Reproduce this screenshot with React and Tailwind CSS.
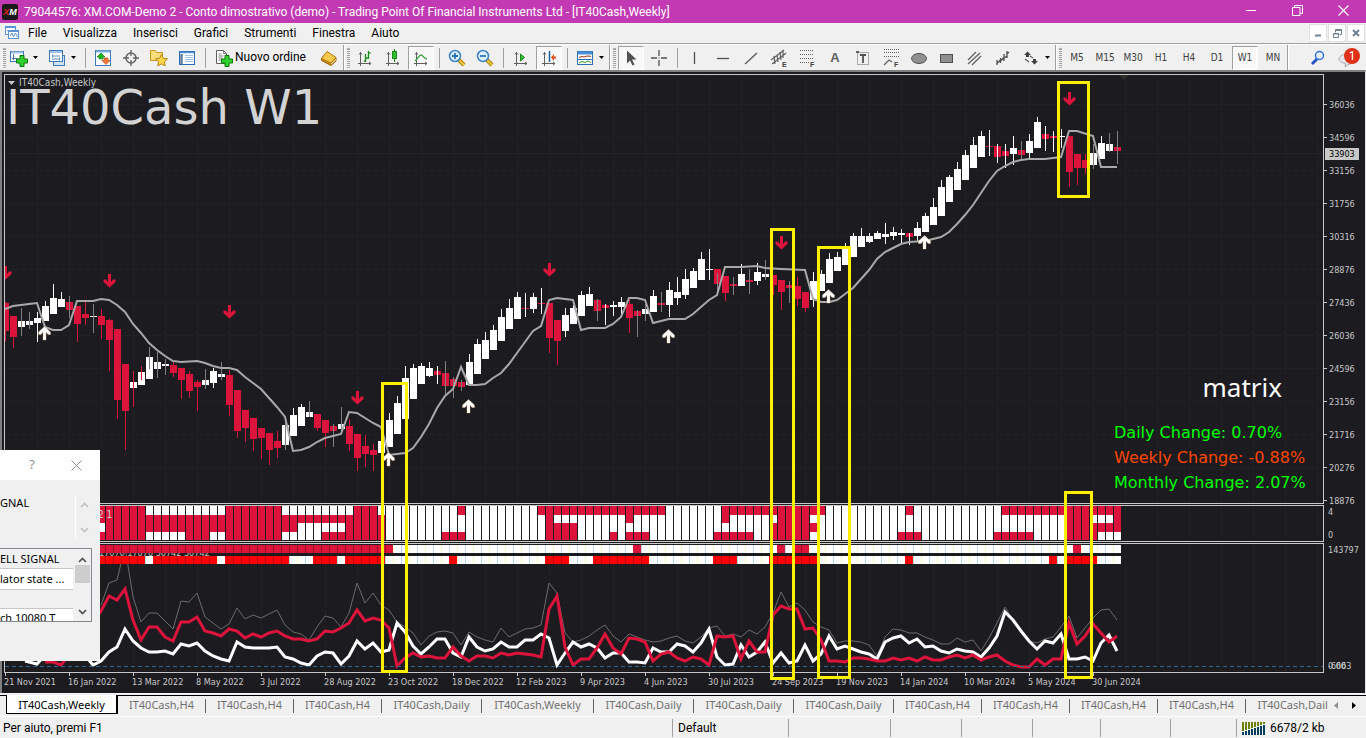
import clsx from 'clsx'

// one entry per week: [kind, body top, body bottom, wick top, wick bottom, wick colour]
// kind: u = up (white), d = down (crimson)
const CANDLES = [
  ['d', 303, 331, 302, 341], ['d', 316, 337, 316, 348], ['u', 321, 327, 308, 336, 'g'], ['u', 321, 325, 312, 329, 'g'],
  ['u', 318, 323, 312, 342], ['u', 306, 321, 301, 321], ['u', 298, 314, 284, 314], ['u', 299, 307, 292, 307],
  ['d', 302, 310, 296, 318, 'g'], ['d', 306, 324, 306, 342], ['d', 314, 318, 302, 325], ['u', 316, 317, 304, 333, 'g'],
  ['d', 316, 325, 309, 339], ['d', 320, 340, 319, 371], ['d', 329, 400, 329, 419], ['d', 364, 411, 364, 450],
  ['u', 382, 388, 371, 407, 'r'], ['u', 372, 385, 366, 380, 'r'], ['u', 357, 379, 347, 369, 'g'], ['u', 362, 369, 352, 378, 'g'],
  ['u', 364, 366, 359, 375, 'g'], ['d', 365, 373, 362, 377], ['d', 368, 380, 368, 399], ['d', 374, 391, 371, 398],
  ['d', 382, 387, 380, 411], ['u', 380, 385, 369, 389, 'g'], ['u', 371, 383, 368, 388], ['u', 374, 377, 362, 380, 'g'],
  ['d', 375, 405, 370, 416], ['d', 390, 431, 390, 438], ['d', 410, 428, 410, 442], ['d', 418, 439, 418, 451],
  ['d', 428, 438, 428, 459], ['d', 433, 450, 433, 465], ['d', 441, 448, 431, 458], ['u', 425, 445, 418, 450, 'g'],
  ['u', 415, 436, 408, 436], ['u', 407, 426, 404, 426], ['u', 412, 417, 401, 417, 'g'], ['d', 414, 428, 414, 431],
  ['d', 420, 433, 420, 447], ['d', 426, 431, 424, 447, 'g'], ['u', 424, 429, 407, 434, 'g'], ['d', 426, 444, 419, 451],
  ['d', 434, 458, 434, 471], ['d', 446, 454, 435, 467], ['d', 450, 455, 444, 471], ['u', 441, 453, 441, 453],
  ['u', 420, 447, 413, 447], ['u', 403, 434, 396, 434], ['u', 378, 419, 366, 419], ['u', 368, 399, 364, 399],
  ['u', 366, 384, 363, 384], ['u', 368, 376, 362, 377], ['d', 371, 375, 366, 384, 'w'], ['d', 373, 386, 361, 394, 'g'],
  ['d', 379, 386, 377, 398, 'g'], ['d', 382, 387, 380, 391, 'g'], ['u', 362, 385, 354, 385], ['u', 344, 374, 339, 374],
  ['u', 340, 359, 332, 359], ['u', 330, 350, 325, 350], ['u', 317, 341, 309, 341], ['u', 308, 329, 299, 329],
  ['u', 297, 319, 292, 319], ['d', 308, 309, 293, 317, 'w'], ['u', 297, 309, 293, 313], ['d', 303, 304, 288, 314, 'w'],
  ['d', 303, 338, 303, 353], ['d', 320, 341, 320, 365], ['u', 315, 331, 308, 337], ['u', 308, 324, 305, 324],
  ['u', 295, 316, 291, 316], ['u', 294, 306, 287, 306], ['d', 300, 311, 299, 321, 'g'], ['d', 305, 308, 304, 325, 'w'],
  ['u', 305, 307, 301, 316], ['u', 302, 307, 297, 317], ['d', 304, 318, 300, 333], ['d', 311, 316, 310, 337, 'g'],
  ['u', 309, 314, 304, 321, 'g'], ['u', 296, 312, 290, 312], ['d', 303, 305, 292, 312, 'g'], ['u', 290, 305, 282, 317],
  ['u', 292, 298, 277, 305], ['u', 279, 295, 269, 299], ['u', 271, 288, 268, 288], ['u', 259, 280, 252, 280],
  ['u', 269, 270, 249, 280], ['d', 269, 284, 273, 293, 'g'], ['d', 276, 293, 276, 301], ['d', 284, 286, 277, 295, 'g'],
  ['u', 274, 286, 264, 286], ['d', 280, 282, 269, 294, 'g'], ['u', 272, 281, 263, 285], ['u', 274, 277, 260, 280, 'g'],
  ['d', 275, 285, 275, 295], ['d', 280, 292, 280, 310], ['d', 285, 288, 281, 303, 'g'], ['d', 286, 299, 277, 306],
  ['d', 292, 308, 292, 312], ['u', 281, 300, 272, 307], ['u', 274, 291, 270, 291], ['u', 259, 283, 253, 283],
  ['u', 257, 271, 252, 271], ['u', 249, 265, 243, 265], ['u', 236, 257, 233, 257], ['u', 236, 247, 228, 247],
  ['u', 236, 242, 233, 243], ['u', 233, 239, 231, 239], ['u', 234, 237, 223, 244], ['u', 232, 236, 227, 240],
  ['u', 233, 235, 229, 244], ['d', 233, 237, 233, 245, 'w'], ['u', 228, 236, 222, 241], ['u', 216, 232, 213, 232],
  ['u', 207, 225, 198, 225], ['u', 187, 216, 180, 216], ['u', 177, 202, 175, 202], ['u', 169, 190, 162, 190],
  ['u', 155, 180, 150, 180], ['u', 145, 168, 137, 168], ['u', 136, 157, 131, 157], ['d', 146, 147, 130, 156, 'w'],
  ['d', 146, 157, 144, 163, 'w'], ['d', 151, 156, 144, 168, 'w'], ['u', 148, 154, 136, 165], ['d', 150, 155, 141, 159, 'g'],
  ['u', 141, 153, 134, 159], ['u', 122, 148, 117, 148], ['d', 134, 139, 126, 151, 'w'], ['d', 136, 138, 131, 152, 'w'],
  ['u', 136, 137, 129, 148], ['d', 136, 172, 136, 187], ['d', 154, 168, 154, 185], ['d', 160, 168, 154, 174],
  ['u', 153, 165, 144, 169, 'g'], ['u', 143, 159, 136, 159], ['u', 144, 151, 133, 152, 'g'], ['d', 147, 151, 131, 164, 'g'],
]

const WICK = { w: '#ffffff', r: '#dc143c', g: '#808080' }

const AVERAGE = `5,309 13,306 29,304 37,303 45,327 53,330 61,330 69,325 77,301 93,301 101,299 109,300 117,305 125,312 133,324 141,333
149,343 157,350 165,356 173,361 181,362 197,361 205,363 213,366 221,368 229,368 237,370 245,377 253,383 261,389 269,398 277,407
285,417 293,451 301,450 309,447 317,442 325,438 333,436 341,434 349,412 357,413 365,418 373,423 381,427 389,455 397,454 405,453
413,448 421,437 429,424 437,408 445,396 453,389 461,367 469,385 477,385 485,384 493,378 501,373 509,364 517,353 525,342 533,331
541,326 549,300 557,298 565,299 573,300 581,330 589,328 605,328 613,324 621,317 629,298 637,298 645,300 653,323 661,321 669,319
685,319 693,314 701,307 709,300 717,295 725,267 741,267 757,266 765,268 781,269 805,270 813,299 821,302 829,302 837,300 845,294
853,288 861,279 869,270 877,259 885,252 893,248 901,244 909,242 925,241 941,237 949,232 957,224 965,215 973,205 981,193 989,181
997,171 1005,166 1013,162 1021,160 1029,159 1045,159 1061,157 1069,131 1077,131 1093,136 1101,167 1117,167`

const DOWN_ARROWS = [[5, 266], [109, 274], [229, 305], [357, 391], [549, 263], [781, 236], [1069, 92]]
const UP_ARROWS = [[44, 326], [388, 452], [468, 399], [668, 329], [828, 289], [924, 235]]

// crimson week ranges of the four matrix rows
const MATRIX = [
  { y: 506, h: 9, runs: [[0, 17], [28, 34], [44, 46], [57, 57], [67, 82], [90, 102], [113, 113], [125, 139]] },
  { y: 515, h: 8, runs: [[0, 47], [68, 68], [78, 78], [90, 90], [97, 100], [133, 135], [139, 139]] },
  { y: 523, h: 9, runs: [[0, 11], [13, 36], [43, 47], [68, 71], [96, 101], [133, 139]] },
  { y: 532, h: 8, runs: [[0, 17], [23, 25], [28, 34], [40, 47], [55, 57], [68, 71], [76, 76], [78, 80], [89, 93], [96, 100], [112, 114], [124, 128], [133, 136]] },
]
const STRIPS = [
  { y: 545, color: '#dc143c', runs: [[0, 48], [79, 79], [97, 97], [99, 100], [134, 134]] },
  { y: 556, color: '#ff0000', runs: [[0, 17], [19, 26], [28, 35], [39, 41], [43, 47], [56, 56], [68, 70], [74, 80], [89, 91], [96, 101], [113, 113], [131, 131], [133, 136]] },
]

// volume lines, one value per week starting from week 12
const TOTAL = [605, 583, 580, 547, 597, 622, 613, 613, 621, 629, 601, 602, 593, 617, 623, 629, 624, 608, 619, 615, 618, 614, 610, 625, 632, 634, 640, 627, 616, 618, 627, 613, 583, 603, 593, 605, 610, 622, 627, 633, 645, 636, 632, 631, 633, 645, 632, 637, 640, 642, 628, 637, 633, 629, 628, 625, 583, 593, 633, 642, 640, 636, 630, 625, 636, 642, 634, 637, 640, 642, 641, 638, 636, 641, 643, 637, 628, 626, 636, 634, 637, 630, 634, 627, 613, 592, 607, 603, 610, 622, 627, 630, 643, 641, 641, 642, 645, 656, 637, 629, 630, 633, 633, 637, 640, 644, 644, 638, 642, 640, 651, 638, 623, 607, 620, 630, 641, 643, 639, 637, 627, 616, 638, 628, 618, 610, 609, 620]
const SELL = [611, 596, 600, 589, 620, 640, 627, 627, 637, 641, 622, 622, 617, 631, 633, 636, 629, 631, 638, 634, 637, 633, 631, 636, 639, 639, 641, 639, 631, 632, 628, 623, 610, 621, 618, 620, 628, 666, 658, 653, 657, 656, 658, 658, 647, 656, 661, 656, 656, 658, 653, 655, 653, 654, 655, 657, 609, 596, 647, 665, 659, 659, 648, 634, 648, 654, 638, 639, 642, 661, 654, 652, 658, 661, 657, 659, 665, 636, 637, 636, 659, 641, 652, 652, 615, 606, 609, 609, 629, 628, 640, 661, 661, 662, 658, 658, 659, 661, 661, 658, 660, 658, 661, 657, 660, 660, 657, 655, 658, 655, 660, 657, 655, 661, 665, 667, 667, 659, 665, 659, 659, 623, 644, 636, 624, 633, 642, 636]
const BUY = [661, 652, 647, 629, 641, 648, 652, 652, 651, 654, 644, 646, 643, 651, 656, 659, 661, 642, 647, 648, 648, 648, 647, 657, 659, 663, 665, 656, 652, 653, 664, 656, 641, 649, 643, 652, 650, 623, 632, 646, 654, 647, 639, 639, 653, 657, 637, 647, 651, 649, 642, 647, 647, 640, 640, 634, 638, 665, 653, 642, 647, 644, 648, 658, 653, 653, 662, 662, 663, 648, 652, 652, 644, 646, 652, 643, 629, 657, 665, 664, 645, 657, 652, 642, 663, 653, 663, 661, 645, 661, 654, 636, 649, 646, 649, 652, 654, 659, 642, 638, 636, 643, 639, 647, 646, 651, 653, 649, 651, 652, 657, 648, 636, 612, 620, 631, 641, 649, 641, 643, 634, 659, 659, 657, 661, 643, 635, 651]

const PRICES = [36036, 34596, 33156, 31756, 30316, 28876, 27436, 26036, 24596, 23156, 21716, 20276, 18876]
const DATES = ['21 Nov 2021', '16 Jan 2022', '13 Mar 2022', '8 May 2022', '3 Jul 2022', '28 Aug 2022', '23 Oct 2022', '18 Dec 2022', '12 Feb 2023', '9 Apr 2023', '4 Jun 2023', '30 Jul 2023', '24 Sep 2023', '19 Nov 2023', '14 Jan 2024', '10 Mar 2024', '5 May 2024', '30 Jun 2024']
const MENU = ['File', 'Visualizza', 'Inserisci', 'Grafici', 'Strumenti', 'Finestra', 'Aiuto']
const TABS = ['H4', 'H4', 'H4', 'Daily', 'Weekly', 'Daily', 'Daily', 'Daily', 'H4', 'H4', 'H4', 'H4', 'Daily']
const PERIODS = ['M5', 'M15', 'M30', 'H1', 'H4', 'D1', 'W1', 'MN']
const TAB_WIDTH = { H4: 'w-[88px]', Daily: 'w-[100px]', Weekly: 'w-[112px]' }

const cx = i => 5 + 8 * i
const points = list => list.map((y, i) => `${cx(i + 12)},${y}`).join(' ')

/* ---------- toolbar ---------- */

function Tool({ label, pressed, children }) {
  return (
    <button
      aria-label={label}
      className={clsx(
        'flex h-6 w-[26px] mx-px shrink-0 items-center justify-center',
        pressed && 'border border-white border-t-[#a0a0a0] border-l-[#a0a0a0] bg-[#f8f8f8]'
      )}
    >
      {children}
    </button>
  )
}

function Caret() {
  return (
    <button aria-label="Altro" className="flex h-6 w-[10px] shrink-0 items-center">
      <svg width="5" height="3"><path d="M0 0h5L2.500 3z" fill="#000" /></svg>
    </button>
  )
}

function Sep() {
  return (
    <div className="flex w-2 shrink-0 justify-center">
      <div className="h-5 w-px bg-[#a0a0a0]" />
    </div>
  )
}

function Grip() {
  return <div className="mx-px h-5 w-[3px] shrink-0 border-y border-[#b0b0b0] bg-[repeating-linear-gradient(#a0a0a0_0_1px,#f0f0f0_1px_2px)]" />
}

function GroupEnd() {
  return (
    <div className="flex h-[25px] w-2 shrink-0 items-center">
      <div className="h-full w-px bg-[#a0a0a0]" />
      <div className="mr-px h-full w-px bg-white" />
      <Grip />
    </div>
  )
}

function Icon({ children, w = 18, h = 18 }) {
  return <svg width={w} height={h} viewBox={`0 0 ${w} ${h}`} fill="none" shapeRendering="auto">{children}</svg>
}

const plus = <path d="M10 6.500h4v3.500h3.500v4H14V17.500h-4V14H6.500v-4H10z" fill="#2fd02f" stroke="#067a06" />
const axes = <path d="M4.500 3v14M2 14.500h13M3 5.500l1.500-2 1.500 2M13 13l2 1.500-2 1.500" stroke="#606060" />

const NewChartIcon = () => (
  <Icon>
    <rect x=".5" y="2.500" width="13" height="10" fill="#fff" stroke="#3f78b8" />
    <path d="M1 3.500h12" stroke="#9cc3ea" strokeWidth="2" />
    <path d="M3.500 5v6M2 9.500h6" stroke="#5b7ea5" />
    {plus}
  </Icon>
)
const ProfilesIcon = () => (
  <Icon>
    <rect x="5.500" y="6.500" width="11" height="10" fill="#cfe3f7" stroke="#3f78b8" />
    <rect x="1.500" y="1.500" width="13" height="11" fill="#fff" stroke="#3f78b8" />
    <path d="M2 3h12" stroke="#9cc3ea" strokeWidth="2" />
    <path d="M4 7h8M4 10h8M4.500 5.500v3M11.500 8.500v3" stroke="#5b8ec4" />
  </Icon>
)
const MarketIcon = () => (
  <Icon>
    <rect x="1.500" y="1.500" width="15" height="15" fill="#fff" stroke="#3f78b8" />
    <path d="M2 2.500h14" stroke="#7fb0e3" strokeWidth="2" />
    <path d="M7 4l4 4H9v2H5V8H3z" fill="#1fb51f" stroke="#0a6e0a" strokeWidth=".6" />
    <path d="M12 15.500L8 11.500h2V9h4v2.500h2z" fill="#ff7a3c" stroke="#b03000" strokeWidth=".6" />
  </Icon>
)
const TargetIcon = () => (
  <Icon>
    <circle cx="9" cy="9" r="5" stroke="#606060" strokeWidth="1.500" />
    <path d="M9 1v6M9 11v6M1 9h6M11 9h6" stroke="#606060" strokeWidth="1.300" />
  </Icon>
)
const FavoritesIcon = () => (
  <Icon>
    <path d="M.5 1.500h5l1 2h6v8H.5z" fill="#f7dd7b" stroke="#c79a1e" />
    <path d="M11.500 5.500l1.900 3.700 4.100.6-3 2.900.7 4.100-3.700-1.900-3.700 1.900.7-4.100-3-2.900 4.100-.6z" fill="#ffd54a" stroke="#b78312" />
  </Icon>
)
const NavigatorIcon = () => (
  <Icon>
    <rect x="1.500" y="2.500" width="15" height="13" fill="#fff" stroke="#2a6db4" />
    <path d="M2 3.500h14" stroke="#4f93d8" strokeWidth="1.500" />
    <path d="M3.500 5v10" stroke="#5f7f9f" strokeWidth="2.500" />
    <path d="M7 6.500h8M7 8.500h8M7 10.500h8M7 12.500h8" stroke="#9fc3ea" />
  </Icon>
)
const OrderIcon = () => (
  <Icon>
    <path d="M1.500 1.500h7l3 3v10h-10z" fill="#fff" stroke="#606060" />
    <path d="M8.500 1.500v3h3M3.500 5h3M3.500 7h5M3.500 9h4M3.500 11h3" stroke="#808080" />
    {plus}
  </Icon>
)
const BookIcon = () => (
  <Icon>
    <path d="M1.500 9.500L7 3l9 6v3l-5 4.500-9.500-5z" fill="#c98a14" stroke="#9a6408" />
    <path d="M1.500 9.500L7 2.500l9 6-5 5.500z" fill="#f6c94a" stroke="#b27c10" />
    <path d="M11 15l5-4.500" stroke="#fff3c4" />
  </Icon>
)
const BarsIcon = () => <Icon>{axes}<path d="M9.500 5v8M12.500 2v8M9.500 12H8M12.500 4h2M9.500 9h3" stroke="#178a17" strokeWidth="1.300" /></Icon>
const CandleIcon = () => <Icon>{axes}<path d="M10.500 0v13" stroke="#178a17" /><rect x="8.500" y="2.500" width="4" height="7" fill="#2fc02f" stroke="#178a17" /></Icon>
const LineIcon = () => <Icon>{axes}<path d="M3 12c3-2 4-6 6-6s2 3 6 4" stroke="#3aa03a" strokeWidth="1.300" /></Icon>
const ScrollIcon = () => <Icon>{axes}<path d="M8.500 5l4 3.500-4 3.500z" fill="#35c235" stroke="#178a17" /></Icon>
const ShiftIcon = () => <Icon>{axes}<path d="M9.500 2v11" stroke="#205f9e" strokeWidth="1.500" /><path d="M11 8.500L14 5v2.500h2v2h-2V12z" fill="#e2501e" /></Icon>

function ZoomIcon({ minus }) {
  return (
    <Icon>
      <path d="M11 11l5 5" stroke="#a97a10" strokeWidth="4" />
      <path d="M11 11l5 5" stroke="#f3cf3a" strokeWidth="2" />
      <circle cx="7" cy="7" r="5.500" fill="#d9efff" stroke="#3c82c4" strokeWidth="1.500" />
      <path d={minus ? 'M4 7h6' : 'M4 7h6M7 4v6'} stroke="#2d74b5" strokeWidth="1.800" />
    </Icon>
  )
}
const IndicatorsIcon = () => (
  <Icon>
    <rect x="1.500" y="2.500" width="15" height="13" fill="#fff" stroke="#2d70b5" />
    <path d="M2 4h14" stroke="#4a90d9" strokeWidth="3" />
    <path d="M3 8.500l3-1 2 .5 3-1 4 .3" stroke="#a03010" />
    <path d="M2 10.500h14" stroke="#2d70b5" />
    <path d="M3 14l3-1.500 3 1 3-1.500 3 1.500" stroke="#2b9a2b" />
  </Icon>
)
const PointerIcon = () => <Icon><path d="M5 1.500v13l3-3 2.500 5 2-1-2.500-5h4.500z" fill="#505050" /></Icon>
const CrossIcon = () => <Icon><path d="M9 1v6M9 11v6M1 9h6M11 9h6M9 8.500v1" stroke="#505050" strokeWidth="1.300" /></Icon>
const HLineIcon = () => <Icon><path d="M3 9.500h12" stroke="#505050" strokeWidth="1.300" /></Icon>
const VLineIcon = () => <Icon><path d="M8.500 3v12" stroke="#505050" strokeWidth="1.300" /></Icon>
const TrendIcon = () => <Icon><path d="M3 15L15 4" stroke="#606060" strokeWidth="1.500" /></Icon>
const ChannelIcon = () => (
  <Icon>
    <path d="M1 11L14 1M2 15L16 4M4 7l1 8M7 6l1 7M10 3l1 8M13 1v8" stroke="#606060" strokeWidth="1.200" />
    <text x="12" y="18" fontSize="7" fontWeight="700" fill="#404040" fontFamily="Liberation Sans, sans-serif">E</text>
  </Icon>
)
const FiboIcon = () => (
  <Icon>
    <path d="M2 1.500h14M2 5.500h14M2 9.500h14M2 13.500h9" stroke="#606060" strokeDasharray="1 1" />
    <text x="12" y="18" fontSize="7" fontWeight="700" fill="#404040" fontFamily="Liberation Sans, sans-serif">F</text>
  </Icon>
)
const FanIcon = () => (
  <Icon>
    <path d="M2 .5h15M2 3.500h15M2 7.500h15" stroke="#606060" strokeDasharray="1 1" />
    <path d="M2 16l5-5 3 2" stroke="#606060" strokeWidth="1.300" />
    <text x="12" y="18" fontSize="7" fontWeight="700" fill="#404040" fontFamily="Liberation Sans, sans-serif">F</text>
  </Icon>
)
const LabelIcon = () => (
  <Icon>
    <rect x="3.500" y="3.500" width="11" height="12" stroke="#606060" strokeDasharray="1 1" />
    <path d="M2 2h3v2H2z" fill="#606060" />
    <path d="M6 6h6M9 6v8" stroke="#505050" strokeWidth="1.800" />
  </Icon>
)
const EllipseIcon = () => <Icon><ellipse cx="9" cy="9.500" rx="7.500" ry="5" fill="#909090" stroke="#505050" /></Icon>
const RectIcon = () => <Icon><rect x="2.500" y="5.500" width="12" height="8" fill="#909090" stroke="#505050" /></Icon>
const EquiIcon = () => <Icon><path d="M2 11L10 3M2 15L14 4M6 16l9-9" stroke="#606060" strokeWidth="1.300" /></Icon>
const CycleIcon = () => <Icon><path d="M3 16v-5M3 14.500l3-3M6.500 14V9M6.500 12l3-3M10 12V5M10 9l3-2M13 9V2M13 5l2-2" stroke="#505050" strokeWidth="1.300" /></Icon>
const ArrowsIcon = () => (
  <Icon>
    <path d="M5.500 2.500L9 6H7v2H4V6H2z" fill="#404040" />
    <path d="M12.500 15.500L9 12h2v-2h3v2h2z" fill="#404040" />
    <path d="M3 10l4 3M8 7l3 2" stroke="#606060" strokeWidth="1.200" />
  </Icon>
)

function Toolbar() {
  return (
    <div className="flex h-[26px] items-center border-t border-white pl-0.5">
      <Grip />
      <div className="flex items-center -ml-0.5">
        <Tool label="Nuovo grafico"><NewChartIcon /></Tool><Caret />
        <Tool label="Profili"><ProfilesIcon /></Tool><Caret />
      </div>
      <Sep />
      <Tool label="Market watch"><MarketIcon /></Tool>
      <Tool label="Finestra dati"><TargetIcon /></Tool>
      <Tool label="Navigatore"><FavoritesIcon /></Tool>
      <Tool label="Terminale"><NavigatorIcon /></Tool>
      <Sep />
      <button className="flex h-6 w-[106px] shrink-0 items-center gap-0.5 whitespace-nowrap pl-1.5 text-xs text-black">
        <OrderIcon />
        <span className="pb-0.5">Nuovo ordine</span>
      </button>
      <Tool label="MetaEditor"><BookIcon /></Tool>
      <GroupEnd />
      <Tool label="Barre"><BarsIcon /></Tool>
      <Tool label="Candele"><CandleIcon /></Tool>
      <Tool label="Linea" pressed><LineIcon /></Tool>
      <Sep />
      <Tool label="Ingrandisci"><ZoomIcon /></Tool>
      <Tool label="Riduci"><ZoomIcon minus /></Tool>
      <Sep />
      <Tool label="Scorrimento"><ScrollIcon /></Tool>
      <Tool label="Spostamento" pressed><ShiftIcon /></Tool>
      <Sep />
      <Tool label="Indicatori"><IndicatorsIcon /></Tool><Caret />
      <GroupEnd />
      <Tool label="Cursore" pressed><PointerIcon /></Tool>
      <Tool label="Mirino"><CrossIcon /></Tool>
      <Sep />
      <Tool label="Linea verticale"><VLineIcon /></Tool>
      <Tool label="Linea orizzontale"><HLineIcon /></Tool>
      <Tool label="Trend"><TrendIcon /></Tool>
      <Tool label="Canale"><ChannelIcon /></Tool>
      <Tool label="Fibonacci"><FiboIcon /></Tool>
      <Tool label="Testo"><span className="font-['Liberation_Sans',sans-serif] text-[13px] font-bold text-[#606060]">A</span></Tool>
      <Tool label="Etichetta"><LabelIcon /></Tool>
      <Tool label="Ventaglio"><FanIcon /></Tool>
      <Tool label="Ellisse"><EllipseIcon /></Tool>
      <Tool label="Rettangolo"><RectIcon /></Tool>
      <Tool label="Equidistante"><EquiIcon /></Tool>
      <Tool label="Cicli"><CycleIcon /></Tool>
      <Tool label="Frecce"><ArrowsIcon /></Tool><Caret />
      <GroupEnd />
      {PERIODS.map(p => (
        <Tool key={p} label={p} pressed={p === 'W1'}>
          <span className="font-['DejaVu_Sans_Condensed','DejaVu_Sans',sans-serif] text-[10px] text-[#404040]">{p}</span>
        </Tool>
      ))}
      <div className="h-[25px] w-0.5 border-l border-[#a0a0a0] bg-white" />
      <div className="ml-auto flex items-center pr-1.5">
        <Tool label="Cerca">
          <Icon>
            <path d="M8 10l-5 5" stroke="#2454c8" strokeWidth="3" />
            <circle cx="10.500" cy="6.500" r="4" fill="#eaf3ff" stroke="#2f6fdc" strokeWidth="1.500" />
          </Icon>
        </Tool>
        <button aria-label="Messaggi" className="relative flex h-6 w-7 items-center pl-1.5">
          <Icon w={18} h={20}>
            <path d="M9 6c5 0 8 2 8 5s-3 5-6 5l-4 3 .5-3.500C3 15 1 13 1 11s3-5 8-5z" fill="#e4e4ea" stroke="#a8a8b0" />
          </Icon>
          <span className="absolute top-0.5 right-0 flex h-4 w-4 items-center justify-center rounded-full bg-[#e03018] text-xs text-white">1</span>
        </button>
      </div>
    </div>
  )
}

/* ---------- chart ---------- */

function Grid({ id, rows }) {
  return (
    <g stroke="#232420" strokeDasharray="5 3" shapeRendering="crispEdges">
      {Array.from({ length: 41 }, (_, i) => (
        <line key={`${id}${i}`} x1={37.5 + 32 * i} x2={37.5 + 32 * i} y1="74" y2="673" />
      ))}
      {rows.map(y => <line key={y} x1="5" x2="2000" y1={y + 0.5} y2={y + 0.5} />)}
    </g>
  )
}

// every plot shares the window's own coordinates, shifted by where the panel starts
function Plot({ top, height, children }) {
  return (
    <div className={clsx('min-w-0 flex-1 overflow-hidden border border-[#c8c8c8]', height)}>
      <svg className="block h-full w-full">
        <g transform={`translate(-5 ${-top})`}>{children}</g>
      </svg>
    </div>
  )
}

function PricePlot() {
  return (
    <Plot top={75} height="h-[430px]">
      <Grid id="p" rows={PRICES.map((_, i) => 104 + 33 * i)} />
      <line x1="5" x2="2000" y1="153.5" y2="153.5" stroke="#232426" />
      <path d="M1119 75h10l-5 5z" fill="#2c2d26" />
      <g shapeRendering="crispEdges">
        {CANDLES.map(([kind, top, bottom, high, low, wick], i) => (
          <g key={i}>
            <rect x={cx(i) - 3} y={top} width="7" height={bottom - top} fill={kind === 'u' ? '#ffffff' : '#dc143c'} />
            <rect x={cx(i)} y={high} width="1" height={low - high} fill={WICK[wick || (kind === 'u' ? 'w' : 'r')]} />
          </g>
        ))}
      </g>
      <polyline points={AVERAGE} fill="none" stroke="#a9a9a9" strokeWidth="2" />
      {DOWN_ARROWS.map(([x, y]) => (
        <path key={x} transform={`translate(${x} ${y})`} d="M-1 0h3v8l2-2.500h2.500V8L.500 13.500-5.500 8V5.500H-3L-1 8z" fill="#dc143c" />
      ))}
      {UP_ARROWS.map(([x, y]) => (
        <path key={x} transform={`translate(${x} ${y})`} d="M-1 14h3V6l2 2.500h2.500V6L.500 .500-5.500 6v2.500H-3L-1 6z" fill="#ffffff" stroke="#e6b98a" strokeWidth=".4" />
      ))}
    </Plot>
  )
}

function MatrixPlot() {
  return (
    <Plot top={506} height="h-[37px]">
      <Grid id="m" rows={[]} />
      <rect x="5" y="506" width="1116" height="34" fill="#ffffff" />
      {MATRIX.map(row => row.runs.map(([a, b]) => (
        <rect key={`${row.y}-${a}`} x={cx(a) - 3} y={row.y} width={8 * (b - a + 1) - 1} height={row.h} fill="#dc143c" />
      )))}
      {CANDLES.map((_, i) => <rect key={i} x={cx(i) - 4} y="506" width="1" height="34" fill="#1c1b20" />)}
      <text x="98" y="518" fontSize="10" fill="#d0d0d0" fontFamily="DejaVu Sans Condensed, DejaVu Sans, sans-serif">2 1</text>
    </Plot>
  )
}

function VolumePlot() {
  return (
    <Plot top={544} height="h-[130px]">
      <Grid id="v" rows={[]} />
      <text x="99" y="556" fontSize="9" fill="#c0c0c0" fontFamily="DejaVu Sans Condensed, DejaVu Sans, sans-serif">17070 17070 50742 50742</text>
      <polyline points={points(TOTAL)} fill="none" stroke="#6c6c6c" strokeWidth="1" />
      {STRIPS.map(({ y, color, runs }) => (
        <g key={y} shapeRendering="crispEdges">
          <rect x="5" y={y} width="1116" height="8" fill="#ffffff" />
          {CANDLES.map((_, i) => (
            <rect key={i} x={cx(i) - 4} y={y} width="1" height="8" fill={i % 2 ? '#f6f6c4' : '#bcd6f0'} />
          ))}
          {runs.map(([a, b]) => <rect key={a} x={cx(a) - 4} y={y} width={8 * (b - a + 1)} height="8" fill={color} />)}
          {runs.map(([a, b]) => Array.from({ length: b - a }, (_, i) => (
            <rect key={`${a}-${i}`} x={cx(a + i) + 4} y={y} width="1" height="8" fill="#000" opacity=".3" />
          )))}
        </g>
      ))}
      <polyline points={`25,661 37,664 45,655 85,655 93,665 ${points(BUY)}`} fill="none" stroke="#ffffff" strokeWidth="3" />
      <polyline points={`45,662 53,662 61,665 69,655 ${points(SELL)}`} fill="none" stroke="#dc143c" strokeWidth="3" />
      <line x1="5" x2="2000" y1="666.5" y2="666.5" stroke="#33658f" strokeDasharray="4 3" />
    </Plot>
  )
}

function Chart() {
  return (
    <main className="relative border-t-2 border-l-2 border-r border-t-[#808080] border-l-[#808080] border-r-[#e8e8e8] bg-[#1c1b20] pt-0.5 pl-0.5 font-['DejaVu_Sans_Condensed','DejaVu_Sans',sans-serif] text-[9px] text-[#c8c8c8]">
      <div className="flex flex-col gap-px">
        <div className="flex">
          <PricePlot />
          <div className="relative h-[430px] w-[41px] pt-3.5">
            {PRICES.map(p => (
              <div key={p} className="flex h-[33px] items-center gap-0.5 before:h-px before:w-[3px] before:bg-[#c8c8c8]">{p}</div>
            ))}
            <div className="absolute top-[74px] left-px h-3 w-[34px] bg-[#c8c8c8] pl-1 leading-3 text-black">33903</div>
          </div>
        </div>
        <div className="flex">
          <MatrixPlot />
          <div className="flex w-[41px] flex-col justify-between pt-px pl-1 leading-[13px]">
            <span>4</span>
            <span>0</span>
          </div>
        </div>
        <div className="flex">
          <VolumePlot />
          <div className="flex w-[41px] flex-col justify-between pt-px pl-1 leading-[13px]">
            <span>143797</span>
            <span className="relative">
              <span>-6663</span>
              <span className="absolute left-0">0.00</span>
            </span>
          </div>
        </div>
      </div>
      <div className="flex h-5 overflow-hidden">
        {DATES.map(d => (
          <div key={d} className="relative w-16 shrink-0 whitespace-nowrap pt-0.5 leading-[14px] before:absolute before:top-0 before:left-px before:h-[3px] before:w-px before:bg-[#c8c8c8]">{d}</div>
        ))}
      </div>

      <div className="absolute top-[5px] left-1.5 flex items-center gap-1 text-[10px] leading-3">
        <svg width="7" height="4"><path d="M0 0h7L3.500 4z" fill="#c8c8c8" /></svg>
        IT40Cash,Weekly
      </div>
      <h1 className="absolute top-2 left-1 font-['DejaVu_Sans',sans-serif] text-5xl leading-[54px] text-[#d3d3d3]">IT40Cash W1</h1>
      <div className="absolute top-[299px] right-[83px] font-['Noto_Sans',sans-serif] text-[26px] leading-8 text-white">matrix</div>
      <div className="absolute top-[348px] right-[51px] w-[200px] whitespace-nowrap font-['DejaVu_Sans',sans-serif] text-base leading-[25px]">
        <p className="text-[#00ff00]">Daily Change: 0.70%</p>
        <p className="text-[#ff4500]">Weekly Change: -0.88%</p>
        <p className="text-[#00ff00]">Monthly Change: 2.07%</p>
      </div>

      <AlertDialog />

      {/* hand-drawn highlights around the signals */}
      <svg className="pointer-events-none absolute -top-0.5 -left-0.5 h-[622px] w-full">
        <g transform="translate(0 -70)" fill="none" stroke="#fff000" strokeWidth="3">
          <rect x="382.5" y="383.5" width="24" height="288" />
          <rect x="771.5" y="229.5" width="22" height="449" />
          <rect x="818.5" y="247.5" width="31" height="430" />
          <rect x="1058.5" y="82.5" width="30" height="114" />
          <rect x="1065.5" y="492.5" width="26" height="185" />
        </g>
      </svg>
    </main>
  )
}

function Chevron({ up, color = '#505050' }) {
  return (
    <svg width="9" height="6" className="block">
      <path d={up ? 'M1 5l3.500-3.500L8 5' : 'M1 1l3.500 3.500L8 1'} fill="none" stroke={color} strokeWidth="1.700" />
    </svg>
  )
}

function AlertDialog() {
  return (
    <section className="absolute top-[378px] -left-0.5 h-[211px] w-[100px] overflow-hidden bg-[#f0f0f0] font-['Noto_Sans',sans-serif] text-[11px] whitespace-nowrap text-black">
      <div className="flex h-[30px] items-center bg-white text-[#909090]">
        <button aria-label="Guida" className="ml-[27px] w-2.5 text-[13px]">?</button>
        <button aria-label="Chiudi" className="ml-[34px]">
          <svg width="11" height="11"><path d="M.5.5l10 10M10.500.5l-10 10" stroke="#909090" /></svg>
        </button>
      </div>
      <div className="mt-4 flex h-[43px]">
        <p className="w-[75px] overflow-hidden leading-[14px]">GNAL</p>
        <div className="flex flex-col justify-between border-l border-white py-1.5 pl-1">
          <Chevron up color="#c0c0c0" />
          <Chevron color="#c0c0c0" />
        </div>
      </div>
      <div className="mt-[9px] flex h-[74px] w-[92px] overflow-hidden border border-l-0 border-[#828790] bg-white">
        <div className="w-[73px] overflow-hidden">
          <div className="h-5 border-b border-[#c8c8c8] bg-[#f0f0f0] leading-5">ELL SIGNAL</div>
          <div className="h-5 leading-5">lator state ...</div>
          <div className="h-5 border-y border-[#c8c8c8] bg-[#f0f0f0]" />
          <div className="leading-[17px]">ch 10080 T</div>
        </div>
        <div className="flex flex-1 flex-col items-center justify-between bg-[#f0f0f0] pt-2 pb-1.5">
          <Chevron up />
          <div className="mt-0.5 mb-auto h-[18px] w-[15px] bg-[#cdcdcd]" />
          <Chevron />
        </div>
      </div>
    </section>
  )
}

/* ---------- window ---------- */

export default function App() {
  return (
    <div className="flex flex-col overflow-hidden bg-[#f0f0f0] font-['Roboto','Noto_Sans',sans-serif] text-xs text-black">
      <header className="flex h-[23px] items-center bg-[#c339b4] text-white">
        <div className="ml-0.5 flex h-4 w-4 items-center justify-center rounded-[2px] bg-[#1a1a1a] font-['Liberation_Sans',sans-serif] text-[9px] font-bold italic">
          <span className="text-[#e02020]">X</span>M
        </div>
        <h2 className="ml-1.5 truncate">79044576: XM.COM-Demo 2 - Conto dimostrativo (demo) - Trading Point Of Financial Instruments Ltd - [IT40Cash,Weekly]</h2>
        <div className="ml-auto flex h-full items-center pb-0.5">
          <button aria-label="Riduci a icona" className="flex w-[46px] justify-center"><svg width="11" height="11"><path d="M0 5.500h10" stroke="#fff" /></svg></button>
          <button aria-label="Ripristina" className="flex w-[46px] justify-center"><svg width="11" height="11"><path d="M.5 2.500h7.500v8H.5zM2.500 2.500v-2h8v8H8" fill="none" stroke="#fff" /></svg></button>
          <button aria-label="Chiudi" className="flex w-[46px] justify-center"><svg width="11" height="11"><path d="M.5.5l10 10M10.500.5l-10 10" stroke="#fff" strokeWidth="1.200" /></svg></button>
        </div>
      </header>

      <nav className="flex h-5 items-center">
        <svg width="16" height="16" className="mr-2 ml-1 shrink-0" fill="none">
          <rect x="1.500" y="1.500" width="10" height="8" fill="#fff" stroke="#5b93d6" />
          <path d="M1 2.500h11M3 5l2 2 2-2 2 2" stroke="#5b93d6" />
          <rect x="4.500" y="5.500" width="10" height="8" fill="#fff" stroke="#5b93d6" />
          <path d="M4 6.500h11M6 11l2-3 1.500 4 2-4 2 4" stroke="#5b93d6" />
        </svg>
        <div className="flex gap-4">
          {MENU.map(m => <button key={m}>{m}</button>)}
        </div>
        <div className="ml-auto flex gap-px pr-px">
          <button aria-label="Riduci grafico" className="flex h-[18px] w-[18px] items-center justify-center border border-[#e0e0e0] bg-white"><svg width="8" height="8"><path d="M1 6.500h6" stroke="#6f8296" strokeWidth="2" /></svg></button>
          <button aria-label="Ripristina grafico" className="flex h-[18px] w-[18px] items-center justify-center border border-[#e0e0e0] bg-white"><svg width="9" height="9"><path d="M.5 4.500h5v4h-5zM2.500 3.500v-3h6v5h-2M2 1.500h7M0 5h6" fill="none" stroke="#6f8296" /></svg></button>
          <button aria-label="Chiudi grafico" className="flex h-[18px] w-[18px] items-center justify-center border border-[#e0e0e0] bg-white"><svg width="8" height="8"><path d="M1 1l6 6M7 1L1 7" stroke="#6f8296" strokeWidth="2" /></svg></button>
        </div>
      </nav>

      <div className="border-t border-[#a0a0a0]">
        <Toolbar />
      </div>

      <Chart />

      <div className="flex h-6 border-b border-white bg-[#f0f0f0] font-['Noto_Sans',sans-serif] text-[11px] text-[#707070]">
        <div className="mt-0.5 flex min-w-0 flex-1 overflow-hidden">
          <div className="h-px w-1.5 shrink-0 bg-black" />
          <button className="h-[19px] w-[112px] shrink-0 border border-t-0 border-r-2 border-black bg-white leading-[17px] text-black">IT40Cash,Weekly</button>
          {TABS.map((t, i) => (
            <button key={i} className={clsx('flex h-5 shrink-0 items-center justify-center border-t border-black', TAB_WIDTH[t])}>
              <span className="flex-1 text-center">IT40Cash,{t}</span>
              <span className="h-3.5 w-px bg-[#606060]" />
            </button>
          ))}
        </div>
        <div className="mt-0.5 flex h-5 w-[38px] items-center justify-between border-t border-black pr-2.5 pl-1.5">
          <button aria-label="Schede precedenti"><svg width="4" height="7"><path d="M4 0v7L0 3.500z" fill="#909090" /></svg></button>
          <button aria-label="Schede successive"><svg width="4" height="7"><path d="M0 0v7l4-3.500z" fill="#000" /></svg></button>
        </div>
      </div>

      <footer className="flex h-[21px] items-center border-t border-[#f0f0f0] leading-[18px]">
        <div className="flex-1 pl-[3px]">Per aiuto, premi F1</div>
        <div className="w-[116px] border-l border-[#a0a0a0] pl-[5px]">Default</div>
        <div className="h-[18px] w-[102px] border-l border-[#a0a0a0]" />
        <div className="h-[18px] w-[71px] border-l border-[#a0a0a0]" />
        <div className="h-[18px] w-[71px] border-l border-[#a0a0a0]" />
        <div className="h-[18px] w-[68px] border-l border-[#a0a0a0]" />
        <div className="h-[18px] w-[70px] border-l border-[#a0a0a0]" />
        <div className="h-[18px] w-[66px] border-l border-[#a0a0a0]" />
        <div className="flex w-[130px] items-center gap-1 border-l border-[#a0a0a0] pl-[5px] whitespace-nowrap">
          <svg width="24" height="13" shapeRendering="crispEdges">
            {[0, 1, 2, 3, 4, 5, 6, 7].map(i => (
              <g key={i}>
                <rect x={i * 3} y="0" width="2" height={9 - i} fill="#6b8000" />
                <rect x={i * 3} y={10 - i} width="2" height={3 + i} fill="#003f5c" />
              </g>
            ))}
          </svg>
          6678/2 kb
        </div>
      </footer>
    </div>
  )
}
